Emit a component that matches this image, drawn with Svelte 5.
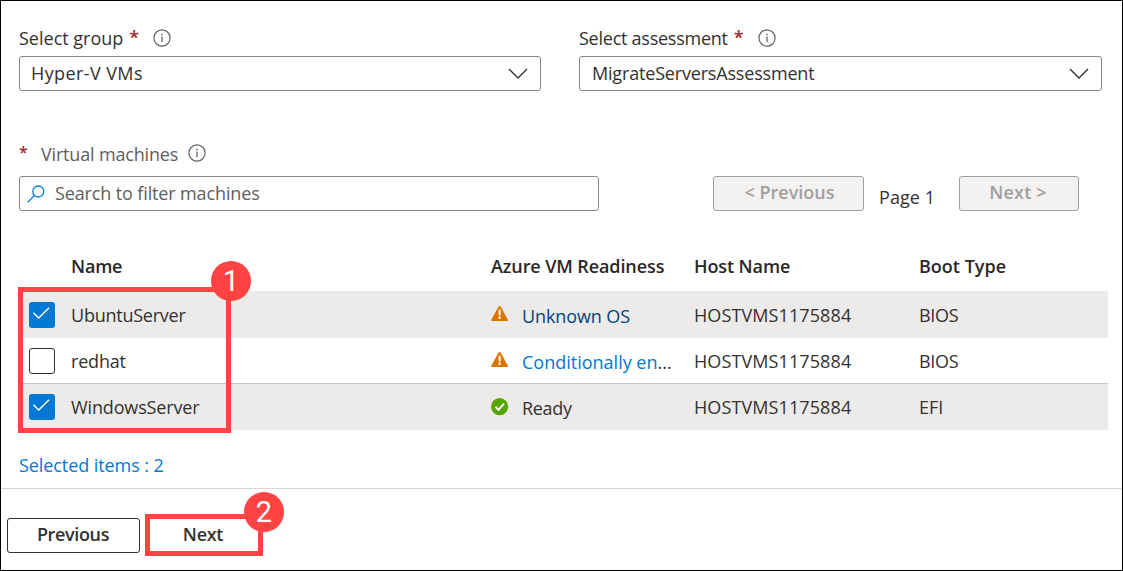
<script>
  let machines = $state([
    { name: 'UbuntuServer', cls: 'ubuntu', checked: true, status: 'warn', text: 'Unknown OS', link: 'visited', host: 'HOSTVMS1175884', boot: 'BIOS' },
    { name: 'redhat', cls: 'redhat', checked: false, status: 'warn', text: 'Conditionally en', link: 'plain', more: true, host: 'HOSTVMS1175884', boot: 'BIOS' },
    { name: 'WindowsServer', cls: 'windows', checked: true, status: 'ok', text: 'Ready', link: '', host: 'HOSTVMS1175884', boot: 'EFI' }
  ]);
  const selected = $derived(machines.filter((m) => m.checked).length);
</script>

{#snippet info()}
  <svg class="info" viewBox="0 0 18 18" width="18" height="18">
    <circle cx="9" cy="9" r="8.1" fill="none" stroke="#605e5c" stroke-width="1.15" />
    <rect x="8.4" y="7.4" width="1.2" height="5.8" fill="#605e5c" />
    <rect x="8.3" y="4.8" width="1.4" height="1.4" fill="#605e5c" />
  </svg>
{/snippet}

{#snippet chevron()}
  <svg viewBox="0 0 20 12" width="20" height="12">
    <path d="M1 1 L10 10 L19 1" fill="none" stroke="#323130" stroke-width="1.4" />
  </svg>
{/snippet}

<div class="frame">
  <div class="fields">
    <div class="field">
      <div class="label"><span>Select group</span><span class="star">*</span>{@render info()}</div>
      <div class="select"><span class="hyper">Hyper-V VMs</span>{@render chevron()}</div>
    </div>
    <div class="field second">
      <div class="label"><span class="assess">Select assessment</span><span class="star">*</span>{@render info()}</div>
      <div class="select"><span class="migrate">MigrateServersAssessment</span>{@render chevron()}</div>
    </div>
  </div>

  <div class="label vm"><span class="star">*</span><span class="vmtext">Virtual machines</span>{@render info()}</div>

  <div class="toolbar">
    <div class="search">
      <svg viewBox="0 0 18 18" width="18" height="18">
        <circle cx="11.3" cy="6.5" r="5.5" fill="none" stroke="#0078d4" stroke-width="1.3" />
        <path d="M7.3 10.6 L0.7 17.2" fill="none" stroke="#0078d4" stroke-width="1.3" />
      </svg>
      <span>Search to filter machines</span>
    </div>
    <button class="pager prev" disabled>&lt; Previous</button>
    <span class="page">Page 1</span>
    <button class="pager next" disabled>Next &gt;</button>
  </div>

  <div class="grid">
    <div class="row head">
      <span></span><span class="hname">Name</span><span class="hready">Azure VM Readiness</span><span class="hhost">Host Name</span><span>Boot Type</span>
    </div>
    {#each machines as m}
      <div class="row item" class:on={m.checked}>
        <button class="check" class:ticked={m.checked} aria-label={m.name} onclick={() => (m.checked = !m.checked)}>
          {#if m.checked}
            <svg viewBox="0 0 26 26" width="26" height="26">
              <path d="M4.4 10.8 L9.7 16.1 L20.1 5.7" fill="none" stroke="#fff" stroke-width="1.4" />
            </svg>
          {/if}
        </button>
        <span class={m.cls}>{m.name}</span>
        <span class="ready">
          {#if m.status === 'warn'}
            <svg viewBox="0 0 18 18" width="18" height="18">
              <path d="M7.3 2 Q8.6 0.1 9.9 2 L16.8 14.4 Q17.4 16 15.8 16 H1.4 Q-0.2 16 0.4 14.4 Z" fill="#db7500" />
              <path d="M7.4 4.8 H9.8 L9.4 10.7 H7.8 Z" fill="#fff" />
              <circle cx="8.6" cy="12.8" r="1.25" fill="#fff" />
            </svg>
          {:else}
            <svg viewBox="0 0 18 18" width="18" height="18">
              <circle cx="8.6" cy="8.6" r="8.6" fill="#57a300" />
              <path d="M4.4 8.8 L7.5 11.9 L13 5.6" fill="none" stroke="#fff" stroke-width="2" />
            </svg>
          {/if}
          <span class="state {m.link} {m.cls}-state">{m.text}{#if m.more}<i>...</i>{/if}</span>
        </span>
        <span class="host">{m.host}</span>
        <span class:bios={m.boot === 'BIOS'}>{m.boot}</span>
      </div>
    {/each}
    <div class="mark mark-grid"><span class="badge">1</span></div>
  </div>

  <div class="selected">Selected items : {selected}</div>

  <div class="footer">
    <button class="nav">Previous</button>
    <div class="nextwrap">
      <button class="nextbtn">Next</button>
      <span class="badge">2</span>
    </div>
  </div>
</div>

<style>
  :global(body) { background: #fff; overflow: hidden; }
  .frame {
    box-sizing: border-box; width: 1123px; height: 571px; border: 1px solid #000; background: #fff;
    display: flex; flex-direction: column; padding-top: 25px;
    font: 400 18px/24px "Open Sans", "Noto Sans", sans-serif; color: #323130; white-space: nowrap;
  }
  button { font: inherit; color: inherit; padding: 0; margin: 0; box-sizing: border-box; }
  svg { display: block; flex: none; }

  .fields { display: flex; gap: 38px; padding-left: 18px; }
  .field { width: 522px; }
  .field.second { width: 523px; }
  .label { display: flex; height: 24px; }
  .label .star { color: #a4262c; font-weight: 600; margin-left: 6px; line-height: 22px; }
  .label .info { margin: 3px 0 0 14px; }
  .assess { letter-spacing: -0.25px; }
  .select {
    box-sizing: border-box; height: 35px; margin-top: 6px; padding: 0 12px 0 11px;
    border: 1px solid #8a8886; border-radius: 3px;
    display: flex; align-items: center; justify-content: space-between; line-height: 33px;
  }
  .second .select { padding: 0 12px; }
  .hyper { letter-spacing: 0.4px; }
  .migrate { letter-spacing: -0.18px; }

  .label.vm { margin-top: 51px; padding-left: 18px; color: #605e5c; }
  .label.vm .star { margin: 0; width: 22px; font-size: 16px; line-height: 20px; }
  .label.vm .info { margin-left: 10px; margin-top: 2px; }
  .vmtext { letter-spacing: -0.17px; }

  .toolbar { display: flex; margin-top: 10px; padding-left: 18px; height: 35px; }
  .search {
    box-sizing: border-box; width: 580px; height: 35px; padding-left: 7px;
    border: 1px solid #8a8886; border-radius: 3px;
    display: flex; align-items: center; gap: 10px; color: #605e5c; letter-spacing: -0.13px;
  }
  .search span { padding-bottom: 2px; }
  .pager { height: 35px; border: 1px solid #a19f9d; border-radius: 3px; background: #f3f2f1; color: #a19f9d; font-weight: 600; padding-bottom: 4px; }
  .prev { width: 151px; margin-left: 114px; padding-left: 2px; }
  .next { width: 120px; letter-spacing: 0.2px; padding-right: 2px; }
  .page { width: 80px; margin-left: 15px; padding-top: 9px; letter-spacing: 0.05px; }

  .grid { position: relative; margin: 32px 0 0 18px; padding-top: 11px; }
  .row { display: grid; grid-template-columns: 52px 420px 203px 225px 1fr; width: 1089px; }
  .head { font-weight: 600; height: 37px; color: #292827; }
  .hname { letter-spacing: -0.2px; }
  .hready { letter-spacing: -0.1px; }
  .hhost { letter-spacing: -0.1px; }
  .item { box-sizing: border-box; height: 46px; line-height: 47px; border-bottom: 1px solid transparent; }
  .item:nth-child(2) { height: 47px; line-height: 48px; }
  .item:nth-child(3) { border-bottom-color: #c8c6c4; }
  .item.on { background: #edebe9; }
  .check { width: 26px; height: 26px; margin: 10px 0 0 10px; border: 1px solid #323130; border-radius: 3px; background: #fff; }
  .item:nth-child(2) .check { margin-top: 11px; }
  .check.ticked { border: 0; background: #0078d4; }
  .ubuntu { letter-spacing: -0.24px; }
  .redhat { letter-spacing: -0.2px; }
  .windows { letter-spacing: -0.14px; }
  .windows-state { letter-spacing: -0.3px; }
  .ready { display: flex; }
  .ready svg { margin-top: 14px; }
  .item:nth-child(3) .ready svg { margin-top: 13px; }
  .ready .state { margin-left: 13px; padding-top: 1px; }
  .visited { color: #004578; }
  .plain { color: #0078d4; }
  .state i { font-style: normal; color: #323130; }
  .ubuntu-state { letter-spacing: -0.1px; }
  .host { letter-spacing: 0.1px; }
  .bios { letter-spacing: -0.3px; }

  .mark-grid { position: absolute; box-sizing: border-box; left: -1px; top: 44px; width: 213px; height: 146px; border: 5px solid #ff4343; pointer-events: none; }
  .badge {
    position: absolute; width: 40px; height: 40px; border-radius: 50%; background: #ff4343; color: #fff;
    font: 29px/41px Roboto, "Liberation Sans", sans-serif; text-align: center;
  }
  .mark-grid .badge { right: -25px; top: -31px; }

  .selected { margin: 23px 0 0 18px; color: #0078d4; letter-spacing: -0.08px; }
  .footer { margin-top: 11px; border-top: 1px solid #d6d5d4; padding: 25px 0 0 6px; display: flex; font-weight: 600; }
  .nav { width: 133px; height: 35px; margin-top: 4px; padding: 0 1px 4px 0; border: 1px solid #323130; border-radius: 3px; background: #fff; letter-spacing: -0.35px; }
  .nextwrap { position: relative; margin-left: 5px; }
  .nextbtn { display: block; width: 118px; height: 42px; border: 5px solid #ff4343; background: #fff; letter-spacing: -0.3px; padding: 0 2px 3px 0; }
  .nextwrap .badge { right: -21px; top: -22px; }
</style>
